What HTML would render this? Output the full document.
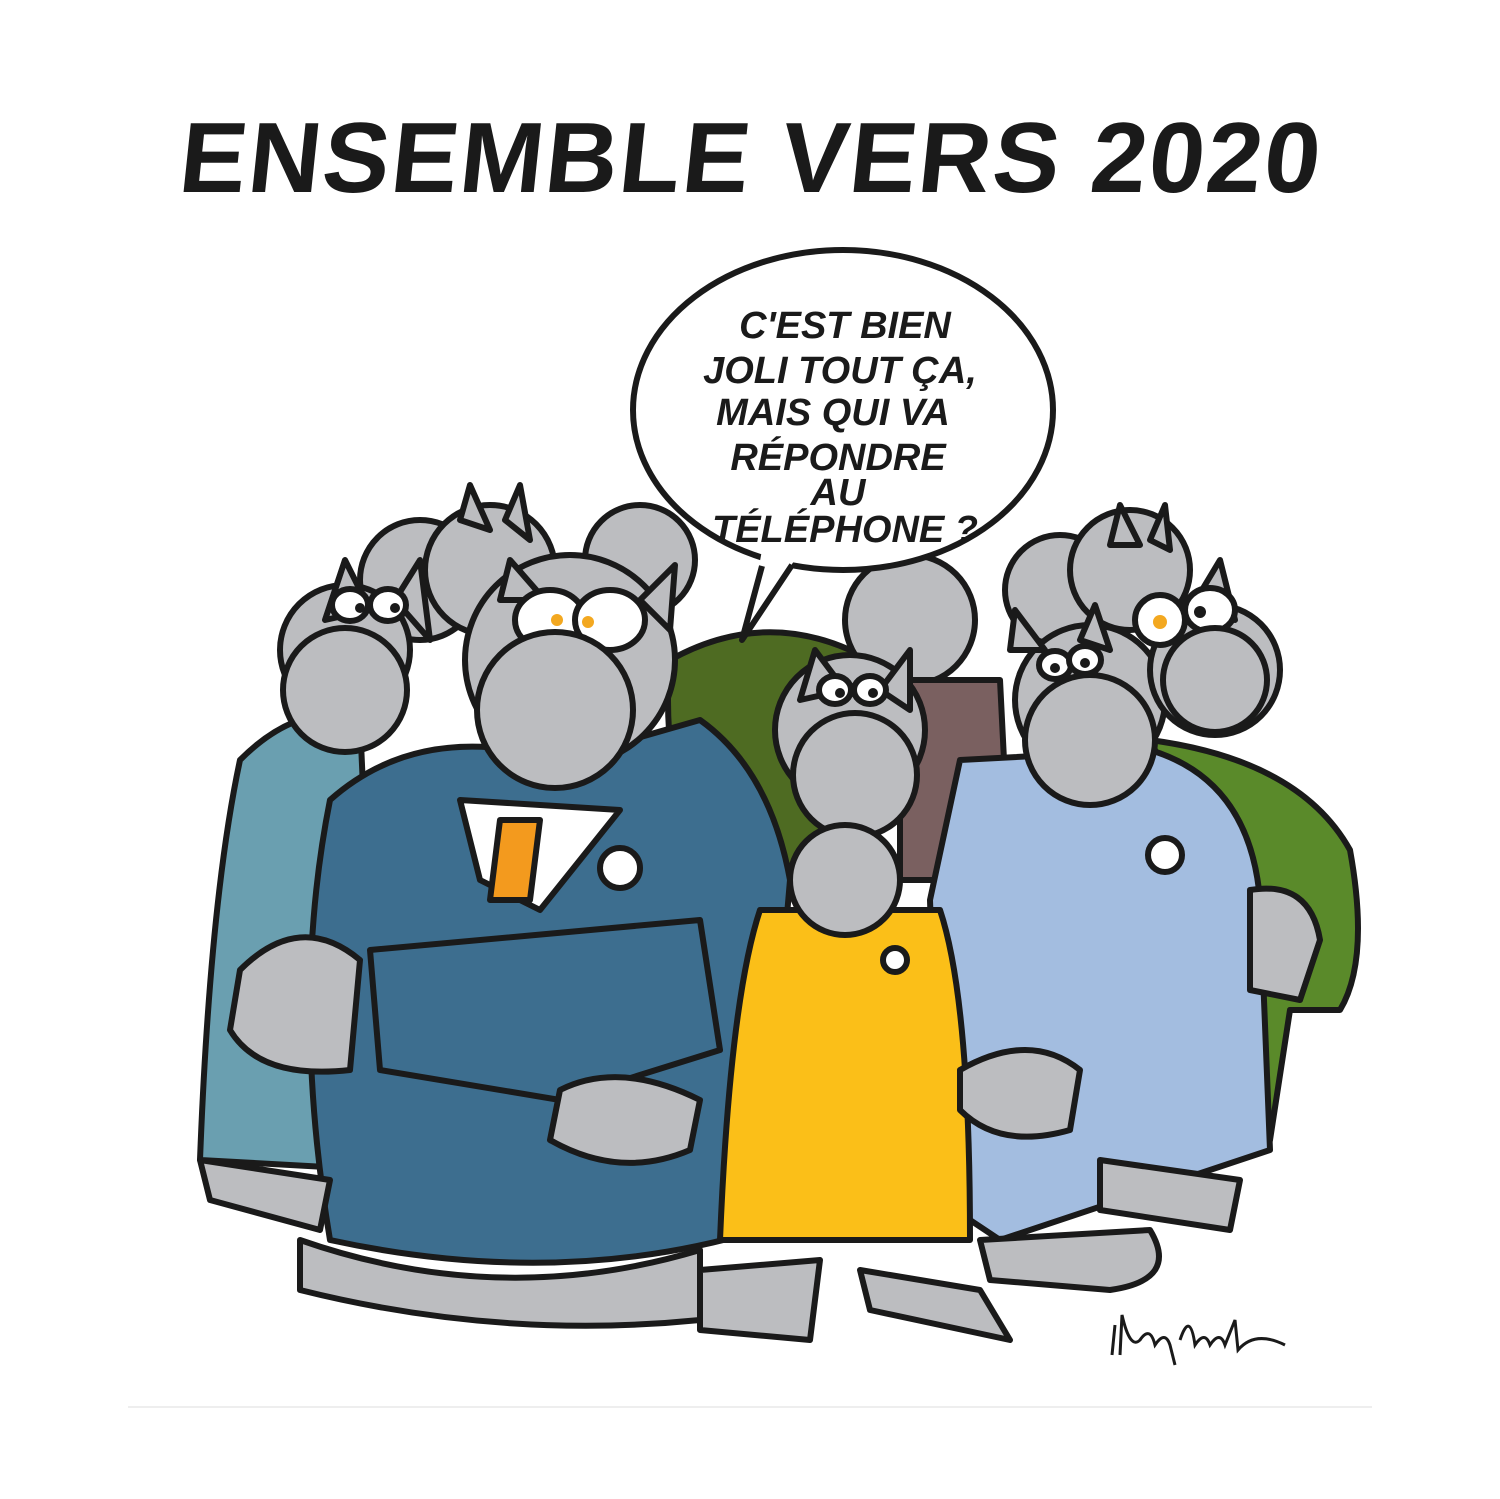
<!DOCTYPE html>
<html><head><meta charset="utf-8"><style>
html,body{margin:0;padding:0;background:#fff;width:1500px;height:1499px;overflow:hidden}
svg{display:block}
</style></head><body>
<svg width="1500" height="1499" viewBox="0 0 1500 1499" xmlns="http://www.w3.org/2000/svg">
<rect width="1500" height="1499" fill="#fff"/>
<text x="750" y="192" text-anchor="middle" font-family="Liberation Sans, sans-serif" font-weight="bold" font-size="100" fill="#1a1a1a" letter-spacing="2" transform="skewX(-6) translate(18,0)">ENSEMBLE VERS 2020</text>

<g stroke="#1a1a1a" stroke-width="6" stroke-linejoin="round">
<circle cx="420" cy="580" r="60" fill="#bcbdc0"/>
<circle cx="490" cy="570" r="65" fill="#bcbdc0"/>
<path d="M460 520 L470 485 L490 530 Z M505 520 L520 485 L530 540 Z" fill="#bcbdc0"/>
<circle cx="640" cy="560" r="55" fill="#bcbdc0"/>
<circle cx="910" cy="620" r="65" fill="#bcbdc0"/>
<circle cx="1060" cy="590" r="55" fill="#bcbdc0"/>
<circle cx="1130" cy="570" r="60" fill="#bcbdc0"/>
<path d="M1110 545 L1120 505 L1140 545 Z M1150 540 L1165 505 L1170 550 Z" fill="#bcbdc0"/>
<path d="M670 660 Q760 610 850 650 Q880 720 870 880 L700 880 Q660 760 670 660Z" fill="#4e6b22"/>
<path d="M900 680 L1000 680 L1010 880 L900 880Z" fill="#7a6060"/>
<path d="M1150 740 Q1300 760 1350 850 Q1370 960 1340 1010 L1290 1010 L1270 1140 L1200 1150 L1160 760Z" fill="#5a8a2a"/>
<path d="M240 760 Q300 700 360 720 L380 1170 L200 1160 Q210 900 240 760Z" fill="#6a9fb0"/>
<path d="M960 760 L1150 750 Q1250 780 1260 900 L1270 1150 L1000 1240 L940 1200 L930 900Z" fill="#a3bde0"/>
<path d="M330 800 Q420 720 560 760 L700 720 Q770 770 790 880 L760 1230 Q560 1290 330 1240 Q290 1000 330 800Z" fill="#3d6e8f"/>
<path d="M370 950 L700 920 L720 1050 L560 1100 L380 1070Z" fill="#3d6e8f"/>
<path d="M460 800 L620 810 L540 910 L480 880Z" fill="#fff"/>
<path d="M500 820 L540 820 L530 900 L490 900 Z" fill="#f39a1e"/>
<circle cx="620" cy="868" r="20" fill="#fff"/>
<path d="M760 910 L940 910 Q970 1000 970 1240 L720 1240 Q730 1000 760 910Z" fill="#fbbf18"/>
<circle cx="895" cy="960" r="12" fill="#fff"/>
<circle cx="1165" cy="855" r="17" fill="#fff"/>
<!-- heads front -->
<circle cx="345" cy="650" r="65" fill="#bcbdc0"/>
<path d="M325 620 L345 560 L370 610 Z M395 600 L420 560 L430 640 Z" fill="#bcbdc0"/>
<ellipse cx="350" cy="605" rx="18" ry="16" fill="#fff"/><ellipse cx="388" cy="605" rx="18" ry="16" fill="#fff"/>
<circle cx="345" cy="690" r="62" fill="#bcbdc0"/>
<circle cx="570" cy="660" r="105" fill="#bcbdc0"/>
<path d="M500 600 L510 560 L545 600Z M640 600 L675 565 L670 630Z" fill="#bcbdc0"/>
<ellipse cx="550" cy="620" rx="35" ry="30" fill="#fff"/><ellipse cx="610" cy="620" rx="35" ry="30" fill="#fff"/>
<circle cx="555" cy="710" r="78" fill="#bcbdc0"/>
<circle cx="850" cy="730" r="75" fill="#bcbdc0"/>
<path d="M800 700 L815 650 L845 690Z M880 690 L910 650 L910 710Z" fill="#bcbdc0"/>
<ellipse cx="835" cy="690" rx="16" ry="14" fill="#fff"/><ellipse cx="870" cy="690" rx="16" ry="14" fill="#fff"/>
<circle cx="855" cy="775" r="62" fill="#bcbdc0"/>
<circle cx="845" cy="880" r="55" fill="#bcbdc0"/>
<circle cx="1090" cy="700" r="75" fill="#bcbdc0"/>
<path d="M1010 650 L1015 610 L1045 650Z M1080 640 L1095 605 L1110 650Z" fill="#bcbdc0"/>
<ellipse cx="1055" cy="665" rx="16" ry="14" fill="#fff"/><ellipse cx="1085" cy="660" rx="16" ry="14" fill="#fff"/>
<circle cx="1090" cy="740" r="65" fill="#bcbdc0"/>
<circle cx="1215" cy="670" r="65" fill="#bcbdc0"/>
<path d="M1190 610 L1220 560 L1235 620Z" fill="#bcbdc0"/>
<ellipse cx="1160" cy="620" rx="25" ry="25" fill="#fff"/><ellipse cx="1210" cy="610" rx="25" ry="22" fill="#fff"/>
<circle cx="1215" cy="680" r="52" fill="#bcbdc0"/>
<path d="M240 970 Q300 910 360 960 L350 1070 Q260 1080 230 1030Z" fill="#bcbdc0"/>
<path d="M560 1090 Q620 1060 700 1100 L690 1150 Q620 1180 550 1140Z" fill="#bcbdc0"/>
<path d="M960 1070 Q1030 1030 1080 1070 L1070 1130 Q1000 1150 960 1110Z" fill="#bcbdc0"/>
<path d="M1250 890 Q1310 880 1320 940 L1300 1000 L1250 990Z" fill="#bcbdc0"/>
<path d="M300 1240 Q500 1310 700 1250 L700 1320 Q500 1340 300 1290Z" fill="#bcbdc0"/>
<path d="M200 1160 L330 1180 L320 1230 L210 1200Z" fill="#bcbdc0"/>
<path d="M700 1270 L820 1260 L810 1340 L700 1330Z" fill="#bcbdc0"/>
<path d="M860 1270 L980 1290 L1010 1340 L870 1310Z" fill="#bcbdc0"/>
<path d="M980 1240 L1150 1230 Q1180 1280 1110 1290 L990 1280Z" fill="#bcbdc0"/>
<path d="M1100 1160 L1240 1180 L1230 1230 L1100 1210Z" fill="#bcbdc0"/>
<ellipse cx="843" cy="410" rx="210" ry="160" fill="#fff"/>
</g>
<g fill="#1a1a1a">
<circle cx="557" cy="620" r="6" fill="#f3a820"/><circle cx="588" cy="622" r="6" fill="#f3a820"/>
<circle cx="360" cy="608" r="5"/><circle cx="395" cy="608" r="5"/>
<circle cx="840" cy="693" r="5"/><circle cx="873" cy="693" r="5"/>
<circle cx="1055" cy="668" r="5"/><circle cx="1085" cy="663" r="5"/>
<circle cx="1160" cy="622" r="7" fill="#f3a820"/><circle cx="1200" cy="612" r="6"/>
</g>
<path d="M762 550 L747 632 L800 552Z" fill="#fff"/>
<path d="M762 566 L742 640 L792 565" fill="none" stroke="#1a1a1a" stroke-width="6" stroke-linejoin="round"/>
<g font-family="Liberation Sans, sans-serif" font-weight="bold" font-size="38" fill="#1a1a1a" text-anchor="middle" font-style="italic">
<text x="845" y="338">C'EST BIEN</text>
<text x="840" y="383">JOLI TOUT ÇA,</text>
<text x="833" y="425">MAIS QUI VA</text>
<text x="838" y="470">RÉPONDRE</text>
<text x="838" y="505">AU</text>
<text x="845" y="542">TÉLÉPHONE ?</text>
</g>
<path d="M1112 1355 L1115 1325 M1120 1355 L1122 1315 Q1130 1350 1140 1340 Q1150 1325 1155 1345 Q1165 1330 1170 1345 L1175 1365 M1180 1340 Q1190 1310 1195 1345 Q1205 1330 1210 1345 Q1220 1330 1225 1345 L1235 1320 L1238 1350 Q1255 1330 1285 1345" fill="none" stroke="#1a1a1a" stroke-width="3"/>
<rect x="128" y="1406" width="1244" height="2" fill="#eeeeee"/>
</svg>
</body></html>
